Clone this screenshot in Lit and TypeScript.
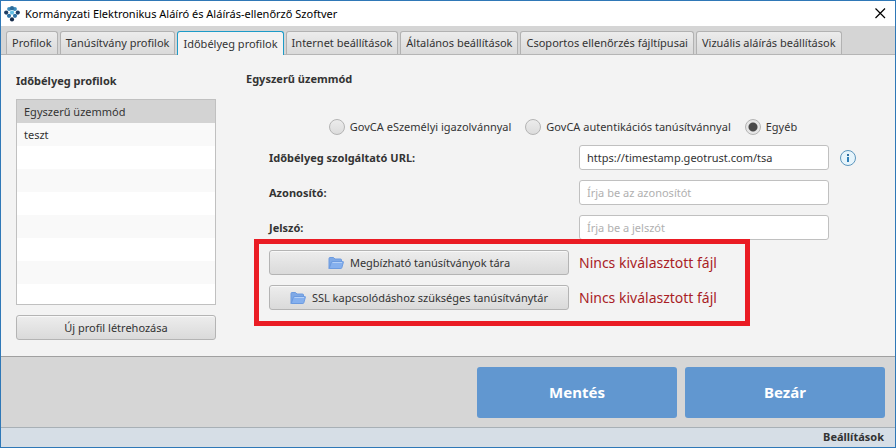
import { LitElement, html, css, svg } from "lit";
import { customElement, state } from "lit/decorators.js";
import { classMap } from "lit/directives/class-map.js";

const TABS = [
  "Profilok",
  "Tanúsítvány profilok",
  "Időbélyeg profilok",
  "Internet beállítások",
  "Általános beállítások",
  "Csoportos ellenőrzés fájltípusai",
  "Vizuális aláírás beállítások",
];

const PROFILES = ["Egyszerű üzemmód", "teszt"];
const MODES = [
  "GovCA eSzemélyi igazolvánnyal",
  "GovCA autentikációs tanúsítvánnyal",
  "Egyéb",
];

const LOGO_DOTS: [number, number, string][] = [
  [5.2, 3, "#3c8cbc"],
  [10.8, 3, "#3c8cbc"],
  [8, 2.2, "#2d6c9a"],
  [2.2, 6.6, "#1d3c62"],
  [13.8, 6.6, "#1d3c62"],
  [8, 6.6, "#62bfe4"],
  [5, 9.8, "#2f74a6"],
  [11, 9.8, "#2f74a6"],
  [8, 13.4, "#152a4a"],
];

const folderIcon = html`<svg class="folder" viewBox="0 0 16 14" width="16" height="14" aria-hidden="true">
  <path d="M1 12.500V2.500Q1 1.500 2 1.500H5.500L7 3H12.500Q13.500 3 13.500 4V6H4Z" fill="#7fa9e6" stroke="#6c9be0" />
  <path d="M1.300 12.500L3.400 6Q3.600 5.500 4.200 5.500H14.800Q15.600 5.500 15.400 6.200L13.800 11.800Q13.600 12.500 12.900 12.500Z" fill="#85b0ee" stroke="#6c9be0" />
  <path d="M4.500 6.500H14" stroke="#b4d0f7" />
</svg>`;

@customElement("app-root")
export class AppRoot extends LitElement {
  @state() private tab = 2;
  @state() private profile = 0;
  @state() private mode = 2;

  static styles = css`
    * { box-sizing: border-box; }
    :host {
      display: flex;
      flex-direction: column;
      min-height: 100vh;
      box-sizing: border-box;
      border: 1px solid #2f78b7;
      background: #f3f3f3;
      color: #333;
      font: 11px/16px "Noto Sans", "Open Sans", sans-serif;
    }
    button, input { font: inherit; color: inherit; margin: 0; }
    h2 { margin: 0; font-size: 11px; line-height: 16px; font-weight: 700; }
    .titlebar {
      display: flex;
      align-items: center;
      gap: 5px;
      height: 25px;
      padding: 0 8px 0 3px;
      background: #fff;
      color: #000;
    }
    .title { flex: 1; white-space: nowrap; }
    .close { display: flex; padding: 0; border: 0; background: none; }
    .tabs {
      display: flex;
      gap: 2px;
      padding: 5px 5px 0;
      height: 29px;
      background: #d5d5d5;
      border-bottom: 1px solid #b5b5b5;
    }
    .tab {
      height: 23px;
      padding: 0 5px;
      border: 1px solid #b2b2b2;
      border-bottom: 0;
      border-radius: 3px 3px 0 0;
      background: linear-gradient(#ececec, #dadada);
      white-space: nowrap;
    }
    .tab.active {
      height: 24px;
      border-color: #1d9bc8;
      background: #f3f3f3;
    }
    .content { display: flex; flex: 1; gap: 30px; padding: 16px 15px; }
    .sidebar { display: flex; flex-direction: column; width: 200px; gap: 10px; padding-top: 2px; }
    .list {
      flex: 1;
      margin: 0;
      padding: 0;
      list-style: none;
      border: 1px solid #c0c0c0;
      background: repeating-linear-gradient(#fff 0 23px, #f9f9f9 23px 46px);
    }
    .item {
      display: block;
      width: 100%;
      height: 23px;
      padding: 0 7px;
      border: 0;
      background: none;
      text-align: left;
    }
    .item.selected { background: #d3d3d3; }
    .push {
      display: flex;
      align-items: center;
      justify-content: center;
      gap: 6px;
      height: 25px;
      padding: 0 8px;
      border: 1px solid #b4b4b4;
      border-radius: 3px;
      background: linear-gradient(#ededed, #dadada);
      box-shadow: inset 0 1px #f8f8f8;
      white-space: nowrap;
    }
    .main { flex: 1; min-width: 0; }
    .form {
      display: grid;
      grid-template-columns: minmax(0, 300px) minmax(0, 250px) 18px;
      grid-auto-rows: 25px;
      gap: 10px;
      align-items: center;
      margin-top: 23px;
      padding-left: 23px;
    }
    .modes {
      grid-column: 1 / -1;
      align-self: end;
      display: flex;
      justify-content: center;
      gap: 14px;
      margin: 0;
      padding: 0;
      border: 0;
      white-space: nowrap;
    }
    .mode { display: flex; align-items: center; gap: 5px; }
    .radio {
      appearance: none;
      width: 16px;
      height: 16px;
      border: 1px solid #b4b4b4;
      border-radius: 50%;
      background: linear-gradient(#ececec, #dcdcdc);
    }
    .radio:checked { background: radial-gradient(circle, #4a4a4a 0 4px, #e6e6e6 5px); }
    .label { grid-column: 1; font-weight: 700; }
    .field {
      width: 100%;
      height: 25px;
      padding: 0 7px;
      border: 1px solid #c0c0c0;
      border-radius: 3px;
      background: #fff;
    }
    .field::placeholder { color: #b0b0b0; opacity: 1; }
    .info { display: flex; padding: 0; border: 0; background: none; }
    .stores {
      grid-column: 1 / 3;
      grid-row: span 2;
      position: relative;
      display: grid;
      grid-template-columns: 6fr 5fr;
      grid-auto-rows: 25px;
      gap: 10px;
      align-items: center;
    }
    .stores::before {
      content: "";
      position: absolute;
      inset: -11px 79px -16px -15px;
      border: 5px solid #ea1c24;
      pointer-events: none;
    }
    .missing { color: #a91d26; font-size: 14px; white-space: nowrap; }
    .actions {
      display: flex;
      justify-content: flex-end;
      gap: 8px;
      padding: 10px 10px 9px;
      border-top: 1px solid #a0a0a0;
      background: #d6d6d6;
    }
    .action {
      width: 200px;
      height: 51px;
      padding: 0 0 2px;
      border: 0;
      border-radius: 3px;
      background: #6197d0;
      color: #fff;
      font-size: 15px;
      font-weight: 700;
    }
    .status {
      height: 20px;
      padding: 1px 11px;
      border-top: 1px solid #a8b0b6;
      background: #d6dee6;
      text-align: right;
      font-weight: 700;
    }
  `;

  render() {
    return html`
      <header class="titlebar">
        <svg width="16" height="16" viewBox="0 0 16 16" aria-hidden="true">
          ${LOGO_DOTS.map(([x, y, c]) => svg`<circle cx=${x} cy=${y} r="2.1" fill=${c} />`)}
        </svg>
        <span class="title">Kormányzati Elektronikus Aláíró és Aláírás-ellenőrző Szoftver</span>
        <button class="close" aria-label="Bezárás">
          <svg width="13" height="13" viewBox="0 0 13 13"><path d="M1.500 1.500L11 11M11 1.500L1.500 11" stroke="#000" stroke-width="1.200" /></svg>
        </button>
      </header>
      <nav class="tabs" role="tablist">
        ${TABS.map((t, i) => html`<button role="tab" aria-selected=${i === this.tab}
          class=${classMap({ tab: true, active: i === this.tab })}
          @click=${() => (this.tab = i)}>${t}</button>`)}
      </nav>
      <div class="content">
        <aside class="sidebar">
          <h2>Időbélyeg profilok</h2>
          <ul class="list">
            ${PROFILES.map((p, i) => html`<li><button
              class=${classMap({ item: true, selected: i === this.profile })}
              @click=${() => (this.profile = i)}>${p}</button></li>`)}
          </ul>
          <button class="push">Új profil létrehozása</button>
        </aside>
        <main class="main">
          <h2>Egyszerű üzemmód</h2>
          <form class="form">
            <fieldset class="modes">
              ${MODES.map((m, i) => html`<label class="mode"><input class="radio" type="radio" name="mode"
                .checked=${i === this.mode} @change=${() => (this.mode = i)} />${m}</label>`)}
            </fieldset>
            <label class="label" for="url">Időbélyeg szolgáltató URL:</label>
            <input class="field" id="url" type="text" value="https://timestamp.geotrust.com/tsa" />
            <button class="info" type="button" aria-label="Információ">
              <svg width="18" height="18" viewBox="0 0 18 18">
                <circle cx="9" cy="9" r="7.500" fill="#e6f4fb" stroke="#5c96bd" />
                <rect x="8" y="5" width="2" height="2" fill="#2f6f9f" />
                <rect x="8" y="8" width="2" height="5" fill="#2f7fb8" />
              </svg>
            </button>
            <label class="label" for="user">Azonosító:</label>
            <input class="field" id="user" type="text" placeholder="Írja be az azonosítót" />
            <label class="label" for="pass">Jelszó:</label>
            <input class="field" id="pass" type="password" placeholder="Írja be a jelszót" />
            <div class="stores">
              <button class="push" type="button">${folderIcon}Megbízható tanúsítványok tára</button>
              <span class="missing">Nincs kiválasztott fájl</span>
              <button class="push" type="button">${folderIcon}SSL kapcsolódáshoz szükséges tanúsítványtár</button>
              <span class="missing">Nincs kiválasztott fájl</span>
            </div>
          </form>
        </main>
      </div>
      <div class="actions">
        <button class="action">Mentés</button>
        <button class="action">Bezár</button>
      </div>
      <footer class="status">Beállítások</footer>
    `;
  }
}
